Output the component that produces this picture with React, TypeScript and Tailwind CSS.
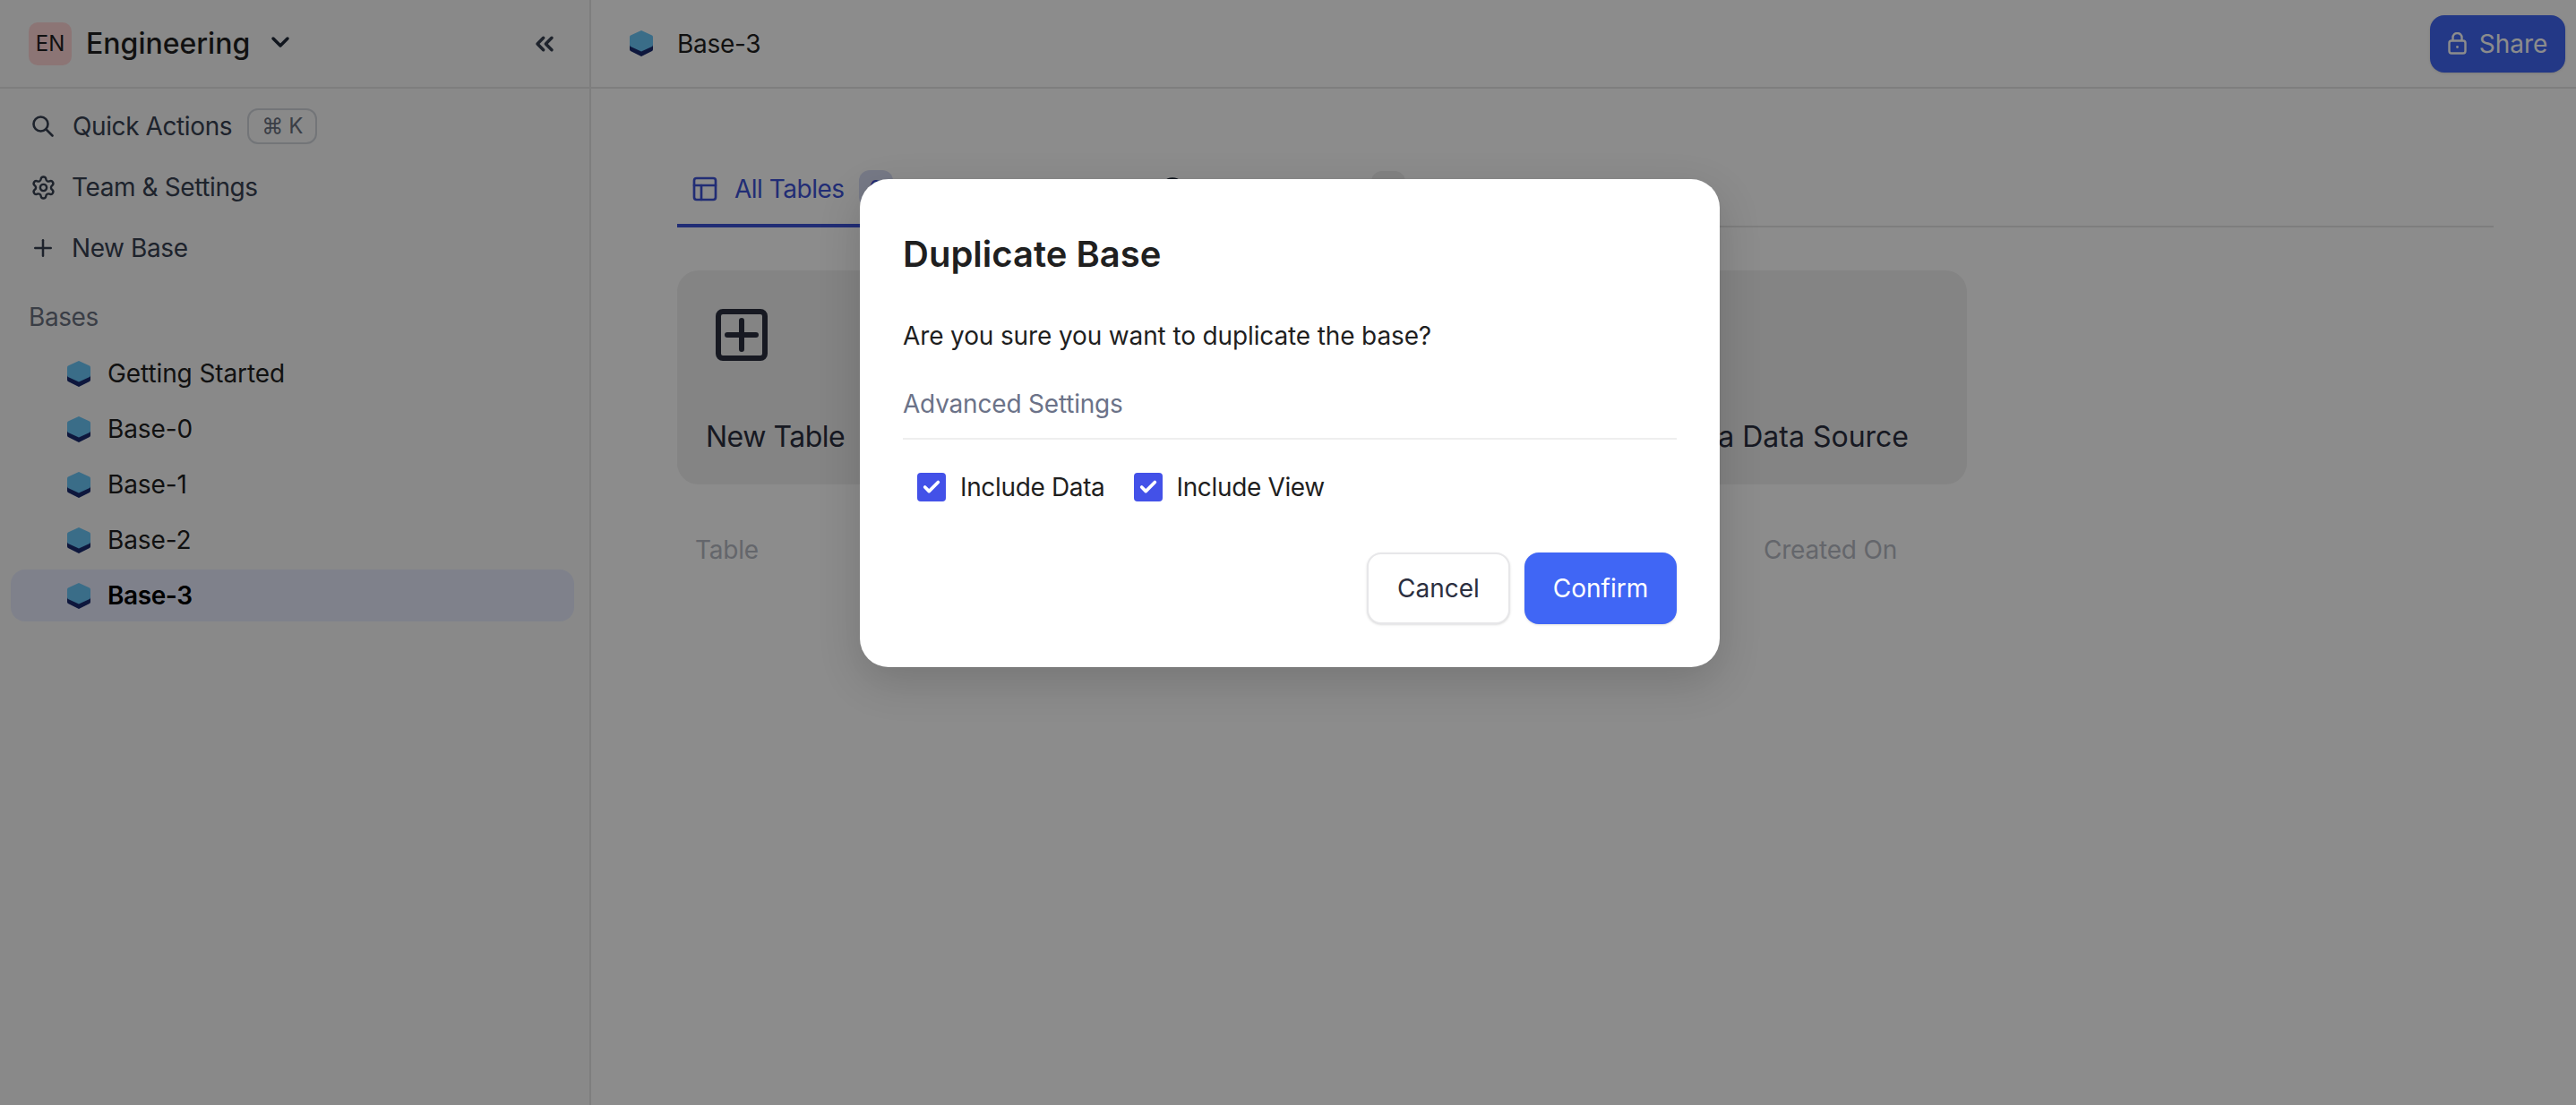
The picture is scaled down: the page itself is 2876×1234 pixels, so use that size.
import { Check, ChevronDown, ChevronsLeft, CircleHelp, PanelsTopLeft, Plus, Settings, Users } from 'lucide-react'

const BASES = ['Getting Started', 'Base-0', 'Base-1', 'Base-2', 'Base-3']

function BaseIcon() {
  return (
    <svg width="26" height="29" viewBox="0 0 26 29" className="shrink-0">
      <path d="M13 29 L1 23 Q0 22.5 0 21 L0 8 L26 8 L26 21 Q26 22.5 25 23 Z" fill="#1a2a70" />
      <path d="M13 0 L25 5.5 Q26 6 26 7.5 L26 16 Q26 17.5 25 18 L13 23.5 L1 18 Q0 17.5 0 16 L0 7.5 Q0 6 1 5.5 Z" fill="#6bc6f7" />
    </svg>
  )
}

function Option({ label }: { label: string }) {
  return (
    <label className="flex items-center gap-4">
      <span className="flex h-8 w-8 items-center justify-center rounded-[4px] bg-[#4351e8]">
        <Check size={22} strokeWidth={4} className="text-white" />
      </span>
      <span className="text-[28px] leading-8 tracking-[-0.35px] text-[#1f1f1f]">{label}</span>
    </label>
  )
}

export default function App() {
  return (
    <div className="relative flex h-screen overflow-hidden bg-white font-['Inter',sans-serif]">
      {/* Sidebar */}
      <aside className="flex w-[660px] shrink-0 flex-col border-r-2 border-[#e5e5e5] bg-[#f9f9fa]">
        <div className="flex h-[99px] items-center border-b-2 border-[#e5e5e5] pl-8 pr-[34px]">
          <div className="flex h-12 w-12 items-center justify-center rounded-[10px] bg-[#ffd6d6] text-[24px] text-[#1f1f1f]">EN</div>
          <span className="ml-4 text-[32px] font-medium text-[#1f1f1f]">Engineering</span>
          <ChevronDown size={32} strokeWidth={2.6} className="mb-1 ml-[18px] text-[#1f2937]" />
          <ChevronsLeft size={32} strokeWidth={2.6} className="ml-auto text-[#374151]" />
        </div>

        <nav className="mt-[8px] flex flex-col text-[28px] tracking-[-0.4px] text-[#374151]">
          <div className="flex h-[68px] items-center pl-[36px]">
            <svg width="24" height="24" viewBox="0 0 24 24" fill="none" stroke="currentColor" strokeWidth="2.6" strokeLinecap="round" className="shrink-0">
              <circle cx="9.5" cy="9.5" r="8" />
              <path d="M15.5 15.5L22.5 22.5" />
            </svg>
            <span className="ml-[21px]">Quick Actions</span>
            <span className="ml-[17px] flex h-10 w-[78px] items-center justify-center rounded-xl border-2 border-[#d1d5db] text-[24px] text-[#6b7280]">⌘ K</span>
          </div>
          <div className="flex h-[68px] items-center pl-[34px]">
            <Settings size={29} strokeWidth={2} />
            <span className="ml-[17px]">Team &amp; Settings</span>
          </div>
          <div className="flex h-[68px] items-center pl-[33px]">
            <Plus size={30} strokeWidth={2} />
            <span className="ml-[17px]">New Base</span>
          </div>
        </nav>

        <div className="mt-[23px] pl-8 text-[28px] leading-10 tracking-[-0.4px] text-[#6b7280]">Bases</div>

        <div className="mt-[14px] flex flex-col gap-1 pl-3 pr-[17px]">
          {BASES.map((name) => (
            <div
              key={name}
              className={
                name === 'Base-3'
                  ? 'flex h-[58px] items-center gap-[19px] rounded-2xl bg-[#e7ecfe] pl-[63px] text-[28px] font-semibold tracking-[-0.4px] text-black'
                  : 'flex h-[58px] items-center gap-[19px] rounded-2xl pl-[63px] text-[28px] tracking-[-0.1px] text-[#1f1f1f]'
              }
            >
              <BaseIcon />
              {name}
            </div>
          ))}
        </div>
      </aside>

      {/* Main */}
      <main className="flex min-w-0 flex-1 flex-col">
        <header className="flex h-[99px] items-center border-b-2 border-[#e5e5e5] pl-[43px] pr-3">
          <BaseIcon />
          <span className="ml-[27px] text-[28px] tracking-[-0.3px] text-[#1f1f1f]">Base-3</span>
          <button className="ml-auto flex h-16 w-[151px] items-center justify-center gap-[14px] rounded-2xl bg-[#4066f5] text-[28px] text-white shadow-sm">
            <svg width="21" height="25" viewBox="0 0 21 25" fill="none" stroke="currentColor" strokeWidth="2.4" className="shrink-0">
              <rect x="1.5" y="9.5" width="18" height="14" rx="2.5" />
              <path d="M5.5 9.5V6a5 5 0 0 1 10 0v3.5" />
              <circle cx="10.5" cy="16.5" r="1.4" fill="currentColor" stroke="none" />
            </svg>
            Share
          </button>
        </header>

        <div className="pl-24 pr-[92px]">
          {/* Tabs */}
          <div className="mt-[86px] flex h-[69px] border-b-2 border-[#e5e5e5] text-[28px] tracking-[-0.5px]">
            <div className="-mb-0.5 flex w-[261px] shrink-0 items-center border-b-4 border-[#3d52d5] pb-[14px] pl-[15px] text-[#3d52d5]">
              <PanelsTopLeft size={32} strokeWidth={2} />
              <span className="ml-[17px]">All Tables</span>
              <span className="ml-4 flex h-[42px] w-[38px] items-center justify-center rounded-xl bg-[#d7dcf5] text-[24px]">0</span>
            </div>
            <div className="ml-[47px] flex w-[230px] shrink-0 items-center overflow-hidden pb-[14px] text-[#1f2937]">
              <Users size={28} strokeWidth={2} className="shrink-0" />
              <span className="ml-4 whitespace-nowrap">Collaborators</span>
            </div>
            <div className="flex w-[275px] shrink-0 items-center justify-between pb-[14px] text-[#1f2937]">
              <CircleHelp size={30} strokeWidth={2} className="shrink-0" />
              <span className="whitespace-nowrap">Sources</span>
              <span className="h-[42px] w-[38px] rounded-xl bg-[#eeeeee]" />
            </div>
          </div>

          {/* Actions */}
          <div className="mt-[48px] grid h-[239px] w-[1440px] grid-cols-3 gap-6 text-[32px] text-[#2b2f3f]">
            <div className="flex flex-col rounded-3xl bg-[#f0f0f0] pl-8 pt-[43px]">
              <svg width="58" height="58" viewBox="0 0 58 58" fill="none" stroke="currentColor" strokeWidth="6" strokeLinecap="round" className="ml-[11px]">
                <rect x="3" y="3" width="52" height="52" rx="5" />
                <path d="M13 29H45M29 13V45" />
              </svg>
              <span className="mt-[65px] leading-10 tracking-[-0.5px]">New Table</span>
            </div>
            <div className="rounded-3xl bg-[#f0f0f0]" />
            <div className="flex items-end justify-end rounded-3xl bg-[#f0f0f0] pb-[33px] pr-[65px]">
              <span className="whitespace-nowrap leading-10">Connect to a Data Source</span>
            </div>
          </div>

          {/* Table head */}
          <div className="mt-[53px] flex justify-between text-[28px] leading-10 tracking-[-0.2px] text-[#b6bac3]">
            <span className="ml-5">Table</span>
            <span className="mr-[666px]">Created On</span>
          </div>
        </div>
      </main>

      {/* Dialog */}
      <div className="absolute inset-0 flex items-start justify-center bg-black/45 pl-1 pt-[200px]">
        <div className="flex h-[545px] w-[960px] flex-col rounded-[32px] bg-white px-12 pt-[60px] shadow-[0_16px_48px_rgba(0,0,0,0.16)]">
          <h2 className="text-[40px] font-semibold leading-[48px] text-[#1f1f1f]">Duplicate Base</h2>
          <p className="mt-[47px] text-[28px] leading-10 tracking-[-0.13px] text-[#1f1f1f]">Are you sure you want to duplicate the base?</p>
          <div className="mt-[38px] border-b-2 border-[#eeeeee] pb-[20px] text-[28px] leading-[36px] tracking-[-0.2px] text-[#6b7288]">Advanced Settings</div>
          <div className="mt-[37px] flex gap-8 pl-4">
            <Option label="Include Data" />
            <Option label="Include View" />
          </div>
          <div className="mt-[57px] flex justify-end gap-4">
            <button className="h-20 w-40 rounded-2xl border-2 border-[#e7e7e9] bg-white text-[28px] text-[#2b2f3f] shadow-sm">Cancel</button>
            <button className="h-20 w-[170px] rounded-2xl bg-[#4066f5] text-[28px] text-white shadow-sm">Confirm</button>
          </div>
        </div>
      </div>
    </div>
  )
}
